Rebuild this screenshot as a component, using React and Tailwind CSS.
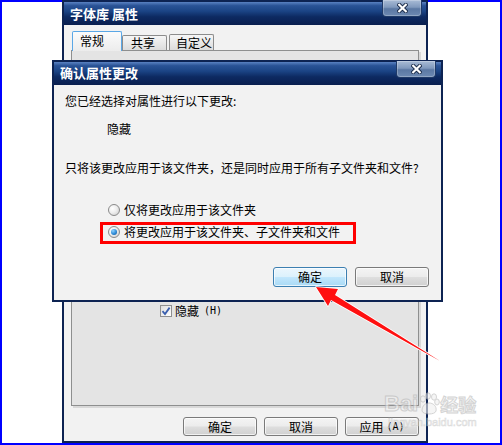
import React from "react";

function CloseBtn({ className }) {
  return (
    <div
      className={
        "flex items-center justify-center w-[40px] h-[17px] shrink-0 rounded-b-[4px] border border-t-0 border-[#1f3a68] bg-[linear-gradient(to_bottom,#a9bcd6_0%,#8099bd_45%,#5b78a3_55%,#6d89b2_100%)] shadow-[inset_0_0_0_1px_rgba(255,255,255,0.25)] " +
        className
      }
    >
      <svg width="11" height="10" viewBox="0 0 11 10">
        <path d="M2.2 1.8 L8.8 8.2 M8.8 1.8 L2.2 8.2" stroke="#1b2c4a" strokeWidth="4" strokeLinecap="square" />
        <path d="M2.2 1.8 L8.8 8.2 M8.8 1.8 L2.2 8.2" stroke="#ffffff" strokeWidth="2.2" strokeLinecap="square" />
      </svg>
    </div>
  );
}

function TitleBar({ title, textClass, closeClass }) {
  return (
    <div className="flex items-start h-[23px] shrink-0 bg-[linear-gradient(to_bottom,#5a82c2_0%,#2a5396_16%,#1b4485_40%,#0d2a62_64%,#091f4f_100%)]">
      <div className={"text-white font-bold text-[13px] leading-[16px] whitespace-nowrap " + textClass}>{title}</div>
      <CloseBtn className={"ml-auto " + closeClass} />
    </div>
  );
}

function Btn({ children, primary, className }) {
  return (
    <div
      className={
        (primary
          ? "border-[#3c7fb1] bg-[linear-gradient(to_bottom,#ebf6fd_0%,#dcf1fc_48%,#c1e6fc_52%,#a9daf5_100%)] "
          : "border-[#7a7a7a] bg-[linear-gradient(to_bottom,#f4f4f4_0%,#ececec_48%,#dedede_52%,#d0d0d0_100%)] ") +
        "flex items-center justify-center w-[74px] border rounded-[3px] shadow-[inset_0_0_0_1px_rgba(255,255,255,0.7)] text-[12px] leading-[16px] " +
        className
      }
    >
      {children}
    </div>
  );
}

function Radio({ checked }) {
  return (
    <div className="flex items-center justify-center w-[12px] h-[12px] rounded-full border border-[#8a8a8a] bg-[radial-gradient(circle_at_35%_35%,#ffffff_0%,#eeeeee_45%,#c9c9c9_100%)] shrink-0">
      {checked && (
        <div className="w-[6px] h-[6px] rounded-full bg-[radial-gradient(circle_at_35%_30%,#8fd2ff_0%,#2d8ad6_55%,#0b4f93_100%)]" />
      )}
    </div>
  );
}

export default function App() {
  return (
    <div className="relative w-[502px] h-[445px] bg-white overflow-hidden font-['Noto_Sans_CJK_SC',sans-serif] text-[12px] leading-[16px] text-black">
      <div className="absolute inset-0 border-2 border-[#0000ff]" />

      {/* Background properties window */}
      <div className="absolute left-[62px] top-0 w-[366px] h-[443px] flex flex-col border-2 border-[#0d2352] bg-[#f2f2f2]">
        <TitleBar title="字体库 属性" textClass="pt-[4px] pl-[6px]" closeClass="-mt-[2px] mr-[4px]" />
        <div className="flex flex-col">
          <div className="flex items-end h-[19px] mt-[6px] pl-[8px]">
            <div className="relative z-10 -mb-px h-[20px] w-[50px] pl-[7px] pt-[1px] border border-b-0 border-[#5aa7e6] rounded-t-[2px] bg-[linear-gradient(to_bottom,#fbfbfb_0%,#ececec_100%)]">
              常规
            </div>
            <div className="h-[15px] w-[45px] pl-[8px] leading-[14px] border border-b-0 border-[#8c8c8c] rounded-t-[2px] bg-[linear-gradient(to_bottom,#f6f6f6_0%,#dcdcdc_100%)]">
              共享
            </div>
            <div className="ml-[2px] h-[16px] w-[45px] pl-[6px] leading-[15px] border border-b-0 border-[#8c8c8c] rounded-t-[2px] bg-[linear-gradient(to_bottom,#f6f6f6_0%,#dcdcdc_100%)]">
              自定义
            </div>
          </div>
          <div className="ml-[7px] w-[348px] h-[356px] border border-[#8e8f8f] bg-[#e4e4e4] shadow-[2px_2px_0_#d8d8d8]">
            <div className="mt-[252px] ml-[88px] flex items-center gap-[3px]">
              <div className="flex items-center justify-center w-[12px] h-[12px] border border-[#8f8f8f] bg-[linear-gradient(135deg,#dcdcdc_0%,#ffffff_100%)]">
                <svg width="10" height="10" viewBox="0 0 10 10">
                  <path d="M1.5 5.2 L4 8 L8.6 1.6" stroke="#3a5fae" strokeWidth="1.8" fill="none" />
                </svg>
              </div>
              <span>隐藏</span>
              <span className="text-[10px] font-['DejaVu_Sans_Mono',monospace] ml-[2px]">(H)</span>
            </div>
          </div>
          <div className="mt-[11px] flex justify-end gap-[7px] pr-[7px]">
            <Btn className="h-[19px]">确定</Btn>
            <Btn className="h-[19px]">取消</Btn>
            <Btn className="h-[19px]">
              应用 <span className="ml-[3px] text-[10px] font-['DejaVu_Sans_Mono',monospace]">(A)</span>
            </Btn>
          </div>
        </div>
      </div>

      {/* Confirm dialog */}
      <div className="absolute left-[52px] top-[60px] w-[391px] h-[242px] flex flex-col border-2 border-[#0d2352] bg-[#f2f2f2]">
        <TitleBar title="确认属性更改" textClass="pt-[3px] pl-[6px]" closeClass="-mt-px mr-[5px]" />
        <div className="flex flex-col pl-[11px] pr-[12px] pt-[8px] whitespace-nowrap">
          <div>您已经选择对属性进行以下更改:</div>
          <div className="mt-[12px] pl-[42px]">隐藏</div>
          <div className="mt-[23px]">只将该更改应用于该文件夹，还是同时应用于所有子文件夹和文件?</div>
          <div className="mt-[26px] pl-[43px] flex items-center gap-[4px] h-[16px]">
            <Radio />
            <span>仅将更改应用于该文件夹</span>
          </div>
          <div className="mt-[6px] pl-[43px] flex items-center gap-[4px] h-[16px]">
            <Radio checked />
            <span>将更改应用于该文件夹、子文件夹和文件</span>
          </div>
          <div className="mt-[27px] flex justify-end gap-[8px]">
            <Btn primary className="h-[20px]">确定</Btn>
            <Btn className="h-[20px]">取消</Btn>
          </div>
        </div>
      </div>

      {/* Red highlight box */}
      <div className="absolute left-[100px] top-[222px] w-[256px] h-[22px] border-[3px] border-[#ff0000]" />

      {/* Red arrow */}
      <svg className="absolute left-0 top-0 pointer-events-none" width="502" height="445" viewBox="0 0 502 445">
        <polygon
          points="316,287 338,289 335,295 440,361 331,300 328,306"
          fill="#ff1010"
          stroke="#ffffff"
          strokeWidth="1.5"
          strokeLinejoin="round"
          paintOrder="stroke"
        />
      </svg>

      {/* Watermark */}
      <div className="absolute left-[384px] top-[392px] flex flex-col items-start opacity-60 pointer-events-none">
        <div className="flex items-center">
          <span className="font-['Liberation_Sans',sans-serif] font-bold text-[22px] leading-[24px] text-[#f0f0f0] [-webkit-text-stroke:1px_#b8b8b8]">Bai</span>
          <svg width="22" height="24" viewBox="0 0 22 24">
            <g fill="#f0f0f0" stroke="#b8b8b8" strokeWidth="1">
              <ellipse cx="5" cy="7" rx="2.5" ry="3.2" />
              <ellipse cx="10" cy="4" rx="2.5" ry="3.2" />
              <ellipse cx="16" cy="5" rx="2.5" ry="3.2" />
              <ellipse cx="19" cy="10" rx="2.3" ry="3" />
              <path d="M4 19 C4 13 8 11 11 11 C15 11 19 14 18 19 C17 23 5 23 4 19 Z" />
            </g>
          </svg>
          <span className="font-['Noto_Sans_CJK_SC',sans-serif] font-bold text-[18px] leading-[22px] text-[#f0f0f0] [-webkit-text-stroke:1px_#b8b8b8]">经验</span>
        </div>
        <span className="ml-[4px] font-['Liberation_Sans',sans-serif] text-[11px] leading-[12px] text-[#e8e8e8] [-webkit-text-stroke:0.5px_#c4c4c4]">jingyan.baidu.com</span>
      </div>
    </div>
  );
}
